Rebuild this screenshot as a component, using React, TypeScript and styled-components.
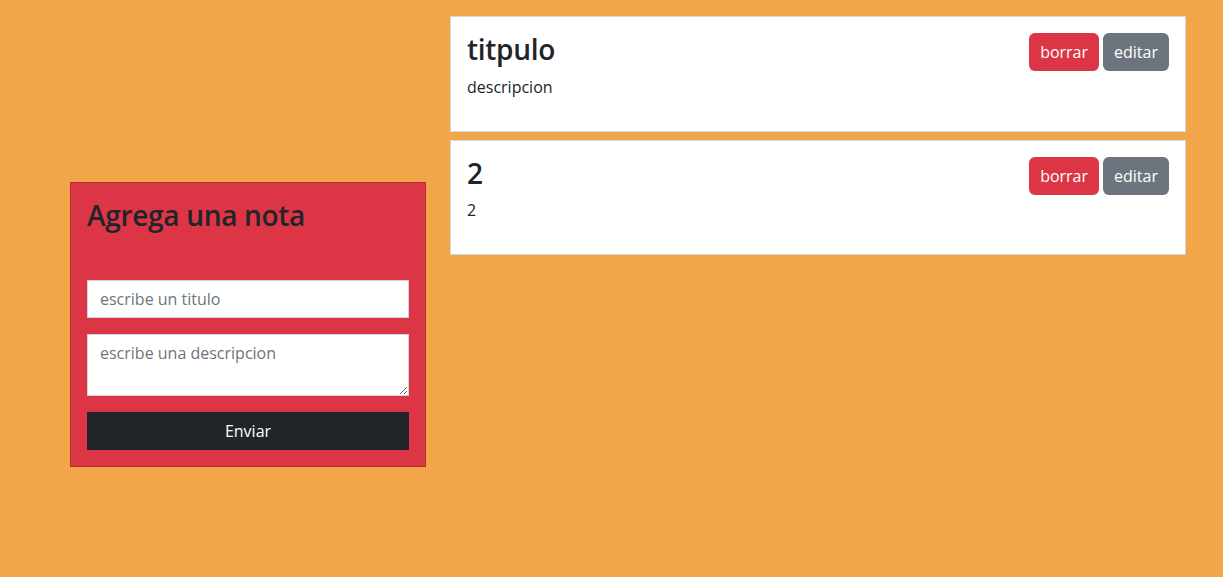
import React from 'react';
import styled, { createGlobalStyle } from 'styled-components';

const GlobalStyle = createGlobalStyle`
  * { box-sizing: border-box; }
  body {
    margin: 0;
    background: #f2a64a;
    font-family: "Open Sans", "Noto Sans", sans-serif;
    font-size: 16px;
    line-height: 1.5;
    color: #212529;
  }
`;

const Page = styled.main`
  display: flex;
  align-items: flex-start;
  gap: 24px;
  padding: 16px 0 0 70px;
`;

const FormColumn = styled.section`
  width: 356px;
  margin-top: 166px;
`;

const NotesColumn = styled.section`
  width: 736px;
  display: flex;
  flex-direction: column;
  gap: 8px;
`;

const FormCard = styled.div`
  background: #dc3545;
  border: 1px solid #b52c39;
  padding: 16px;
`;

const Title = styled.h3`
  margin: 0 0 8px;
  font-size: 28px;
  font-weight: 600;
  letter-spacing: -0.3px;
  line-height: 1.2;
  color: #212529;
`;

const FormTitle = styled(Title)`
  margin-bottom: 47px;
`;

const Form = styled.form`
  display: flex;
  flex-direction: column;
  gap: 16px;
`;

const fieldStyle = `
  display: block;
  width: 100%;
  padding: 6px 12px;
  font: inherit;
  font-size: 16px;
  line-height: 24px;
  color: #212529;
  background: #fff;
  border: 1px solid #ced4da;
  border-radius: 0;
  outline: none;
  &::placeholder { color: #6c757d; opacity: 1; }
`;

const Input = styled.input`
  ${fieldStyle}
  height: 38px;
`;

const TextArea = styled.textarea`
  ${fieldStyle}
  height: 62px;
  resize: vertical;
`;

const SubmitButton = styled.button`
  height: 38px;
  border: none;
  border-radius: 0;
  background: #212529;
  color: #fff;
  font: inherit;
  font-size: 16px;
  cursor: pointer;
`;

const NoteCard = styled.article`
  background: #fff;
  border: 1px solid #d6d6d6;
  padding: 16px;
`;

const NoteHeader = styled.div`
  display: flex;
  justify-content: space-between;
  align-items: flex-start;
`;

const Actions = styled.div`
  display: flex;
  gap: 4px;
`;

const ActionButton = styled.button<{ $variant: 'danger' | 'secondary' }>`
  height: 38px;
  padding: 6px 11px;
  border: none;
  border-radius: 6px;
  background: ${({ $variant }) => ($variant === 'danger' ? '#dc3545' : '#6c757d')};
  color: #fff;
  font: inherit;
  font-size: 16px;
  line-height: 24px;
  cursor: pointer;
`;

const Description = styled.p`
  margin: 0 0 16px;
`;

const notes = [
  { id: 1, title: 'titpulo', description: 'descripcion' },
  { id: 2, title: '2', description: '2' },
];

const App: React.FC = () => {
  return (
    <>
      <GlobalStyle />
      <Page>
        <FormColumn>
          <FormCard>
            <FormTitle>Agrega una nota</FormTitle>
            <Form onSubmit={(e) => e.preventDefault()}>
              <Input placeholder="escribe un titulo" />
              <TextArea rows={2} placeholder="escribe una descripcion" />
              <SubmitButton type="submit">Enviar</SubmitButton>
            </Form>
          </FormCard>
        </FormColumn>
        <NotesColumn>
          {notes.map((note) => (
            <NoteCard key={note.id}>
              <NoteHeader>
                <Title>{note.title}</Title>
                <Actions>
                  <ActionButton $variant="danger">borrar</ActionButton>
                  <ActionButton $variant="secondary">editar</ActionButton>
                </Actions>
              </NoteHeader>
              <Description>{note.description}</Description>
            </NoteCard>
          ))}
        </NotesColumn>
      </Page>
    </>
  );
};

export default App;
